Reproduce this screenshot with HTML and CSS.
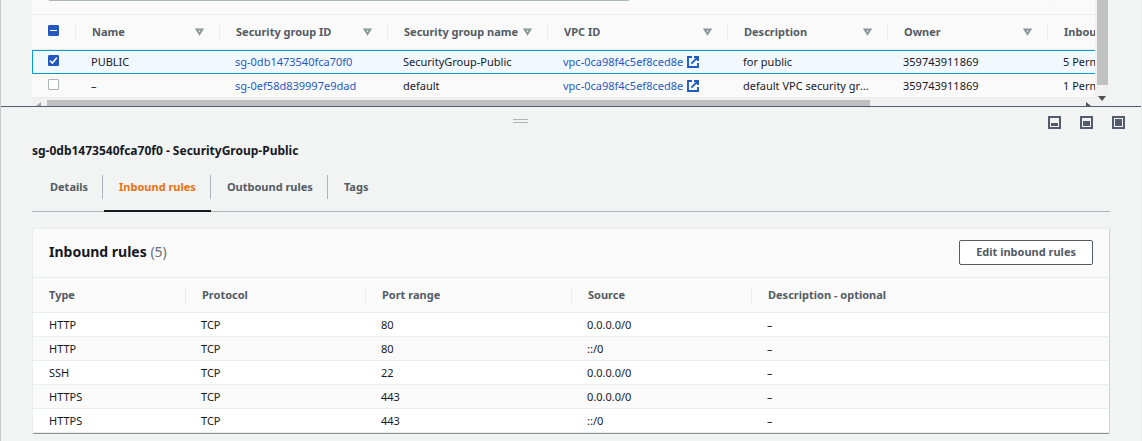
FILE: index.html
```html
<!DOCTYPE html>
<html lang="en">
<head>
<meta charset="utf-8">
<title>Security groups</title>
<link rel="stylesheet" href="styles.css">
</head>
<body>
<svg class="defs" aria-hidden="true">
  <symbol id="sort" viewBox="0 0 9 8"><path d="M1.6 1.5h5.8L4.5 6z" fill="none" stroke="currentColor" stroke-width="2"/></symbol>
  <symbol id="external" viewBox="0 0 12 12"><path d="M5 1H1v10h10V7M7 1h4v4M10.8 1.2L4.4 7.6" fill="none" stroke="currentColor" stroke-width="1.9"/></symbol>
</svg>
<div class="app">
  <section class="list-pane" aria-label="Security groups">
    <div class="list">
      <div class="toolbar">
        <input class="search" type="text" aria-label="Filter security groups">
        <span class="toolbar-divider"></span>
      </div>
      <table class="groups">
        <colgroup><col class="w44"><col class="w144"><col class="w168"><col class="w160"><col class="w180"><col class="w160"><col class="w160"><col class="w160"></colgroup>
        <thead>
          <tr>
            <th><input class="check partial" type="checkbox" aria-label="Select all groups"></th>
            <th><div class="head">Name<button class="sort" aria-label="Sort by name"><svg><use href="#sort"/></svg></button></div></th>
            <th><div class="head">Security group ID<button class="sort" aria-label="Sort by ID"><svg><use href="#sort"/></svg></button></div></th>
            <th><div class="head">Security group name<button class="sort" aria-label="Sort by group name"><svg><use href="#sort"/></svg></button></div></th>
            <th><div class="head">VPC ID<button class="sort" aria-label="Sort by VPC"><svg><use href="#sort"/></svg></button></div></th>
            <th><div class="head">Description<button class="sort" aria-label="Sort by description"><svg><use href="#sort"/></svg></button></div></th>
            <th><div class="head">Owner<button class="sort" aria-label="Sort by owner"><svg><use href="#sort"/></svg></button></div></th>
            <th><div class="head">Inbound rules count</div></th>
          </tr>
        </thead>
        <tbody>
          <tr class="selected">
            <td><input class="check" type="checkbox" checked aria-label="Select PUBLIC"></td>
            <td>PUBLIC</td>
            <td><a href="#">sg-0db1473540fca70f0</a></td>
            <td>SecurityGroup-Public</td>
            <td><a class="ext" href="#">vpc-0ca98f4c5ef8ced8e<svg><use href="#external"/></svg></a></td>
            <td>for public</td>
            <td>359743911869</td>
            <td>5 Permission entries</td>
          </tr>
          <tr>
            <td><input class="check" type="checkbox" aria-label="Select default"></td>
            <td>–</td>
            <td><a href="#">sg-0ef58d839997e9dad</a></td>
            <td>default</td>
            <td><a class="ext" href="#">vpc-0ca98f4c5ef8ced8e<svg><use href="#external"/></svg></a></td>
            <td>default VPC security group</td>
            <td>359743911869</td>
            <td>1 Permission entry</td>
          </tr>
        </tbody>
      </table>
      <div class="hscroll">
        <svg class="arrow-left" viewBox="0 0 5 8"><path d="M5 0v8L0 4z" fill="#a3a3a3"/></svg>
        <div class="htrack"><div class="hthumb"></div></div>
        <svg class="arrow-right" viewBox="0 0 5 8"><path d="M0 0v8l5-4z" fill="#505050"/></svg>
      </div>
    </div>
    <div class="vscroll">
      <div class="vthumb"></div>
      <svg class="arrow-down" viewBox="0 0 8 5"><path d="M0 0h8L4 5z" fill="#505050"/></svg>
    </div>
  </section>

  <section class="detail-pane" aria-label="Details">
    <div class="pane-bar">
      <div class="grip-area"><span class="grip"></span></div>
      <div class="pane-buttons">
        <button aria-label="Small panel"><svg viewBox="0 0 13 13"><path d="M1 1h11v11H1z" fill="none" stroke="currentColor" stroke-width="2"/><path d="M3 7h7v3H3z" fill="currentColor"/></svg></button>
        <button aria-label="Medium panel"><svg viewBox="0 0 13 13"><path d="M1 1h11v11H1z" fill="none" stroke="currentColor" stroke-width="2"/><path d="M3 5h7v5H3z" fill="currentColor"/></svg></button>
        <button aria-label="Full panel"><svg viewBox="0 0 13 13"><path d="M1 1h11v11H1z" fill="none" stroke="currentColor" stroke-width="2"/><path d="M3 3h7v7H3z" fill="currentColor"/></svg></button>
      </div>
    </div>
    <h2 class="title">sg-0db1473540fca70f0 - SecurityGroup-Public</h2>
    <nav class="tabs">
      <a href="#">Details</a>
      <a href="#" class="active" aria-current="page">Inbound rules</a>
      <a href="#">Outbound rules</a>
      <a href="#">Tags</a>
    </nav>
    <div class="card">
      <div class="card-head">
        <h3>Inbound rules <span class="count">(5)</span></h3>
        <button class="edit">Edit inbound rules</button>
      </div>
      <table class="rules">
        <colgroup><col class="w153"><col class="w180"><col class="w206"><col class="w180"><col></colgroup>
        <thead>
          <tr><th><div class="head">Type</div></th><th><div class="head">Protocol</div></th><th><div class="head">Port range</div></th><th><div class="head">Source</div></th><th><div class="head">Description - optional</div></th></tr>
        </thead>
        <tbody>
          <tr><td>HTTP</td><td>TCP</td><td>80</td><td>0.0.0.0/0</td><td>–</td></tr>
          <tr><td>HTTP</td><td>TCP</td><td>80</td><td>::/0</td><td>–</td></tr>
          <tr><td>SSH</td><td>TCP</td><td>22</td><td>0.0.0.0/0</td><td>–</td></tr>
          <tr><td>HTTPS</td><td>TCP</td><td>443</td><td>0.0.0.0/0</td><td>–</td></tr>
          <tr><td>HTTPS</td><td>TCP</td><td>443</td><td>::/0</td><td>–</td></tr>
        </tbody>
      </table>
    </div>
  </section>
</div>
</body>
</html>
```
FILE: styles.css
```css
* { box-sizing: border-box; }
body {
  margin: 0;
  background: #f2f3f3;
  color: #16191f;
  font: 11px/16px "Noto Sans", "Open Sans", sans-serif;
}
button, input { font: inherit; margin: 0; }
button { border: 0; padding: 0; background: none; color: inherit; cursor: pointer; }
a { color: #1f5ac4; text-decoration: none; }
svg { display: block; flex: none; }
.defs { display: none; }
.app { min-height: 100vh; border-left: 1px solid #c8c9c9; border-right: 1px solid #eaeded; }

/* list of groups */
.list-pane { display: flex; height: 106px; overflow: hidden; padding: 0 33px 0 31px; }
.list { flex: 1; min-width: 0; overflow: hidden; background: #fafafa; }
.toolbar { display: flex; justify-content: space-between; height: 14px; padding: 0 44px 0 16px; }
.search { width: 582px; height: 24px; margin-top: -23px; border: 1px solid #aab7b8; border-radius: 2px; background: #fff; }
.toolbar-divider { width: 1px; height: 2px; background: #eaeded; }

table { table-layout: fixed; border-collapse: separate; border-spacing: 0; }
.groups { width: 1176px; }
.rules { width: 100%; }
.w44 { width: 44px; } .w144 { width: 144px; } .w153 { width: 153px; }
.w160 { width: 160px; } .w168 { width: 168px; } .w180 { width: 180px; } .w206 { width: 206px; }

th { height: 36px; padding: 8px 0; border: 1px solid #eaeded; border-width: 1px 0; background: #fafafa; text-align: left; }
.head { display: flex; align-items: center; justify-content: space-between; height: 18px; padding: 0 16px; color: #545b64; font-weight: 700; white-space: nowrap; }
th:not(:last-child) { background: linear-gradient(#eaeded, #eaeded) right 50% / 1px 17px no-repeat #fafafa; }
.sort { color: #879596; }
.sort svg { width: 9px; height: 8px; }
td { height: 24px; padding: 0 15px; border-bottom: 1px solid #eaeded; overflow: hidden; text-overflow: ellipsis; white-space: nowrap; }
th:has(.check), td:has(.check) { padding: 0 0 3px 16px; line-height: 0; }
.selected td { border-top: 1px solid #0a9ad0; border-bottom-color: #0a9ad0; background: #f1f8ff; }
.selected td:first-child { border-left: 1px solid #0a9ad0; padding-left: 15px; }
.ext { display: flex; align-items: center; gap: 4px; }
.ext svg { width: 12px; height: 12px; }

.check { appearance: none; width: 11px; height: 11px; border: 1px solid #aab7b8; border-radius: 1px; background: #fff; }
.check:checked { border-color: #2457c0; background: #2457c0 url("data:image/svg+xml,%3Csvg xmlns='http://www.w3.org/2000/svg' viewBox='0 0 9 9'%3E%3Cpath d='M1 4.7l2.4 2.4L7.8 1.8' fill='none' stroke='white' stroke-width='1.6'/%3E%3C/svg%3E"); }
.partial { border-color: #2457c0; background: linear-gradient(#fff, #fff) center / 7px 1px no-repeat #2457c0; }

.hscroll { display: flex; align-items: center; height: 15px; padding: 0 4px; gap: 6px; background: #f1f1f1; }
.htrack { flex: 1; padding-top: 2px; height: 15px; }
.hthumb { width: calc(80% - 3px); height: 11px; background: #bfbfbf; }
.arrow-left, .arrow-right { width: 5px; height: 8px; }
.vscroll { width: 13px; padding-left: 2px; background: #f1f1f1; }
.vthumb { width: 11px; height: 85px; background: #c1c1c1; }
.arrow-down { width: 8px; height: 5px; margin: 11px 0 0 1px; }

/* split panel */
.detail-pane { padding: 0 31px; border-top: 1px solid #545b70; }
.pane-bar { display: flex; align-items: center; height: 31px; margin: 0 -15px 0 -31px; }
.grip-area { flex: 1; display: flex; justify-content: center; padding: 0 8px 4px 0; }
.grip { width: 15px; height: 4px; border: 1px solid #b0b5b6; border-width: 1px 0; }
.pane-buttons { display: flex; gap: 19px; color: #545b6c; }
.pane-buttons svg { width: 13px; height: 13px; }
.title { margin: 5px 0 16px; font-size: 12px; line-height: 16px; }
.tabs { display: flex; border-bottom: 1px solid #aab7b8; }
.tabs a { position: relative; height: 36px; padding: 4px 15px 0 16px; color: #545b64; font-weight: 700; }
.tabs a:first-child { padding-left: 18px; }
.tabs a:not(:last-child) { background: linear-gradient(#aab7b8, #aab7b8) right top / 1px 24px no-repeat; }
.tabs .active { color: #ec7211; }
.tabs .active::after { content: ""; position: absolute; left: 1px; right: 0; bottom: -1px; height: 2px; background: #16191f; }
.card { margin-top: 16px; border: 1px solid #eaeded; border-right-color: #d0d4d4; border-bottom-color: #879596; border-radius: 2px; background: #fff; }
.card-head { display: flex; align-items: center; justify-content: space-between; height: 48px; padding: 0 16px 2px; background: #fafafa; }
h3 { margin: 0; font-size: 14px; line-height: 20px; }
.count { color: #687078; font-weight: 400; }
.edit { height: 25px; padding: 0 16px; border: 1px solid #545b64; border-radius: 2px; background: #fff; color: #545b64; font-weight: 700; }
.rules td { padding: 0 16px; }
.rules td:not(:first-child) { padding-left: 15px; }
.rules tbody tr:nth-child(even) { background: #fafafa; }
```
